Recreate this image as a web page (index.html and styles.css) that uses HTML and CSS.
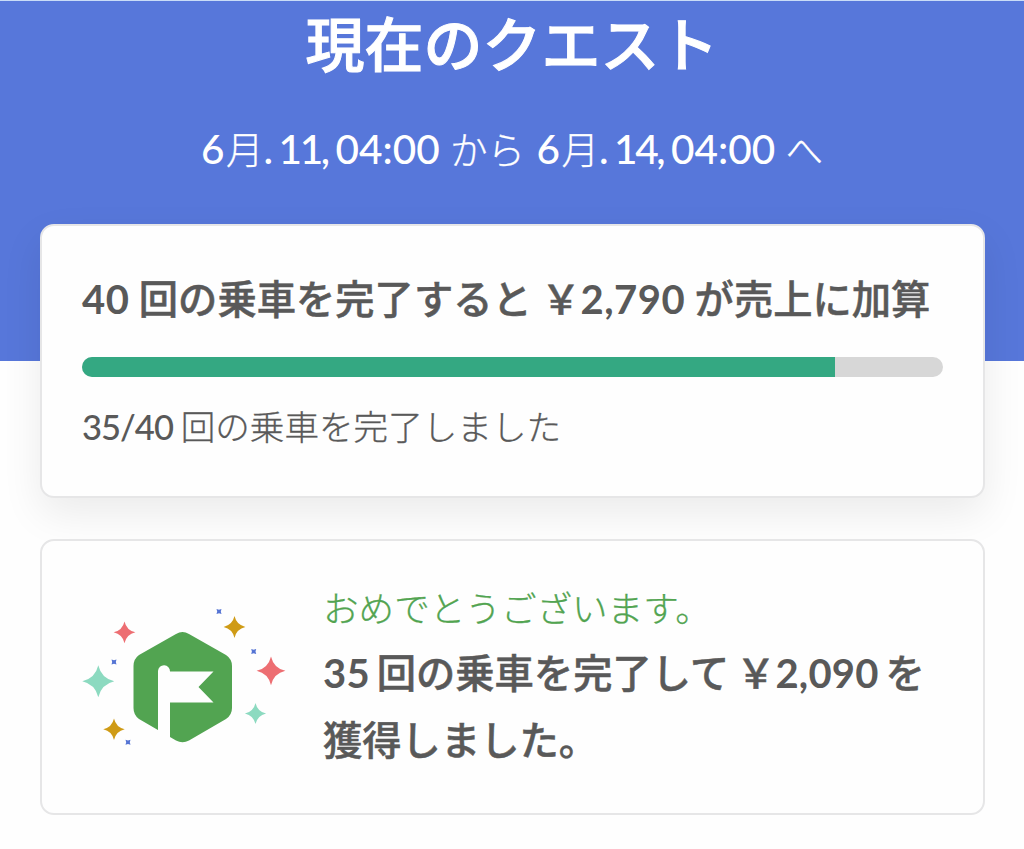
FILE: index.html
```html
<!doctype html>
<html lang="ja">
	<head>
		<meta charset="utf-8" />
		<title>現在のクエスト</title>
		<link rel="stylesheet" href="styles.css">
	</head>
	<body>
		<header>
			<h1>現在のクエスト</h1>
			<p class="period"><span class="num month">6</span>月<span class="num day">. 11, </span><span class="num">04:00 </span>から<span class="num month"> 6</span>月<span class="num day">. 14, </span><span class="num">04:00 </span>へ</p>
		</header>

		<main>
			<section class="card current">
				<h2><span class="num">40 </span>回の乗車を完了すると<span class="num"> </span>￥<span class="num">2,790 </span>が売上に加算</h2>
				<div class="progress"><div class="bar" style="width: 87.5%"></div></div>
				<p class="count"><span class="num">35/40 </span>回の乗車を完了しました</p>
			</section>

			<section class="card done">
				<svg class="badge" width="206" height="142" viewBox="81 606 206 142">
					<defs>
						<path id="star" d="M0 -16 Q3 -3 16 0 Q3 3 0 16 Q-3 3 -16 0 Q-3 -3 0 -16Z" />
						<path id="dot" d="M-2.5 -2.5 L0 -1.8 L2.5 -2.5 L1.8 0 L2.5 2.5 L0 1.8 L-2.5 2.5 L-1.8 0Z" />
					</defs>
					<path fill="#52a451" d="M176 634 Q182.500 630 189 634 L226 655 Q232 659 232 666 V708 Q232 715 226 719 L189 740.500 Q182.500 744 176 740.500 L139 719 Q133.500 715 133.500 708 V666 Q133.500 659 139 655Z" />
					<path fill="#fefefe" d="M158 671 A6 6 0 0 1 170 671.500 H213.500 L198.500 687 L213.500 702.500 H170 V746 H158Z" />
					<use href="#star" fill="#8cdac0" transform="translate(98.300 681.300)" />
					<use href="#star" fill="#ed6e72" transform="translate(124.500 632.300) scale(.68)" />
					<use href="#star" fill="#cf9b16" transform="translate(234.500 627) scale(.68)" />
					<use href="#star" fill="#ed6e72" transform="translate(271 670.800) scale(.9)" />
					<use href="#star" fill="#8cdac0" transform="translate(255.500 713.500) scale(.66)" />
					<use href="#star" fill="#cf9b16" transform="translate(114 729.300) scale(.67)" />
					<g fill="#5574d4">
						<use href="#dot" x="114" y="662" />
						<use href="#dot" x="219" y="611.500" />
						<use href="#dot" x="253.700" y="651.500" />
						<use href="#dot" x="128" y="742.300" />
					</g>
				</svg>
				<div>
					<p class="congrats">おめでとうございます。</p>
					<h2><span class="num">35 </span>回の乗車を完了して<span class="num"> </span>￥<span class="num">2,090 </span>を<br>獲得しました。</h2>
				</div>
			</section>
		</main>
	</body>
</html>
```
FILE: styles.css
```css
* {
	box-sizing: border-box;
}

body {
	margin: 0;
	background: #fefefe;
	color: #595959;
	font-family: "Noto Sans CJK JP", sans-serif;
	white-space: nowrap;
}

h1, h2, p {
	margin: 0;
}

.num {
	font-family: Lato, "Noto Sans CJK JP", sans-serif;
	line-height: 1;
	white-space: pre;
}

header {
	height: 361px;
	padding-top: 1px;
	border-top: 1px solid #c9dcf7;
	background: #5777da;
	color: #fff;
	text-align: center;
}

h1 {
	font-size: 59px;
	font-weight: 500;
	line-height: 80px;
	-webkit-text-stroke: 1px;
}

.period {
	margin-top: 36px;
	font-size: 37.5px;
	font-weight: 300;
	line-height: 60px;
	-webkit-text-stroke: .3px;
}

.period .num {
	font-size: 40.5px;
	font-weight: 500;
	-webkit-text-stroke: 0;
}

.period .month {
	letter-spacing: 1.5px;
}

.period .day {
	letter-spacing: -2.4px;
}

main {
	padding: 0 39px 0 40px;
}

.card {
	border: 2px solid #e6e6e7;
	border-radius: 14px;
	background: #fefefe;
}

.current {
	height: 274px;
	margin-top: -137px;
	padding: 41px 40px 0;
	box-shadow: 0 16px 40px rgba(0, 0, 0, .08);
}

h2 {
	font-size: 39.3px;
	font-weight: 500;
	line-height: 67px;
	-webkit-text-stroke: .5px;
}

h2 .num {
	font-size: 40px;
	font-weight: 700;
	letter-spacing: .5px;
	-webkit-text-stroke: 0;
}

.current h2 {
	line-height: 60px;
}

.progress {
	height: 20px;
	margin-top: 30px;
	border-radius: 10px;
	background: #d7d7d7;
	overflow: hidden;
}

.current h2 .num {
	word-spacing: -.8px;
}

.done h2 .num {
	letter-spacing: .2px;
	word-spacing: -3px;
}

.bar {
	height: 100%;
	background: #34a882;
}

.count {
	margin-top: 18px;
	font-size: 34.6px;
	font-weight: 300;
	line-height: 60px;
	-webkit-text-stroke: .3px;
}

.count .num {
	font-weight: 500;
	letter-spacing: -1px;
	-webkit-text-stroke: 0;
}

.done {
	display: flex;
	gap: 36px;
	height: 276px;
	margin-top: 41px;
	padding: 36px 0 0 39px;
}

.badge {
	margin-top: 29px;
}

.congrats {
	color: #52a451;
	font-size: 35.6px;
	font-weight: 300;
	line-height: 60px;
	-webkit-text-stroke: .3px;
}
```
